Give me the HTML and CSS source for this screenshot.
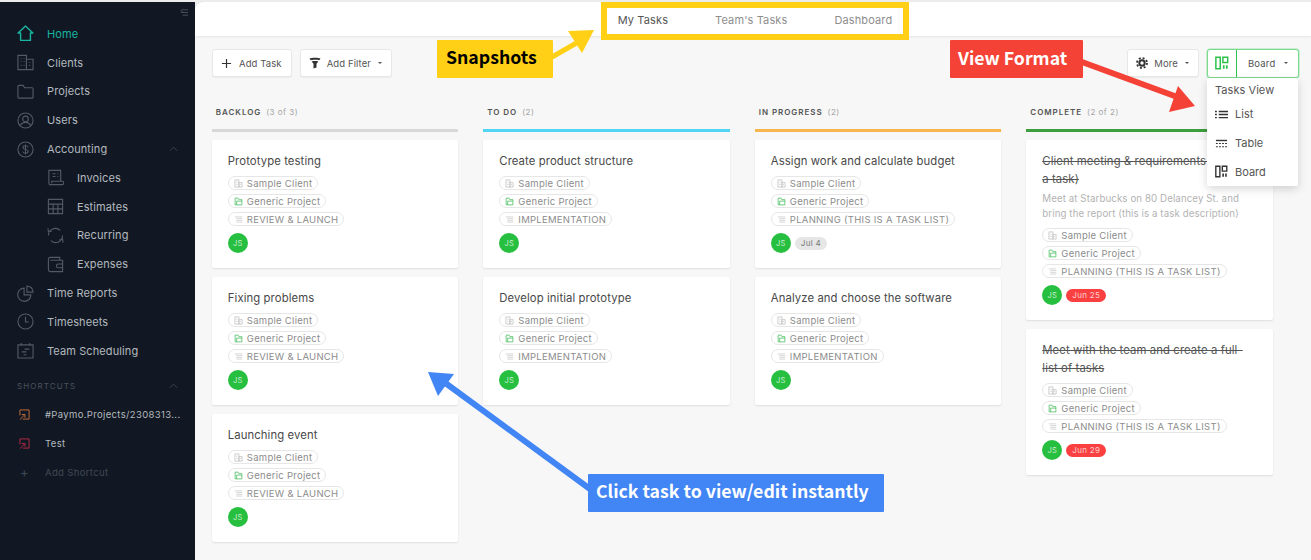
FILE: index.html
```html
<!DOCTYPE html>
<html lang="en">
<head>
<meta charset="utf-8">
<title>Tasks</title>
<link rel="stylesheet" href="styles.css">
</head>
<body>
<svg class="defs" width="0" height="0" aria-hidden="true">
  <symbol id="i-client" viewBox="0 0 10 10"><path d="M1 9V1h4.500v8zM5.500 4H9v5H5.500zM2.500 3.500h1.500M2.500 6h1.500M6.800 6h1" fill="none" stroke="currentColor" stroke-width=".8"/></symbol>
  <symbol id="i-project" viewBox="0 0 12 12"><path d="M1.500 10.500V1.500h4l1 2h4v7zM3.500 10.500V5.500h7" fill="none" stroke="currentColor" stroke-width="1.100"/></symbol>
  <symbol id="i-list" viewBox="0 0 12 10"><path d="M1 1.500h10M3 3.800h8M3 6.100h8M3 8.400h8" fill="none" stroke="currentColor" stroke-width=".8"/></symbol>
  <symbol id="i-short" viewBox="0 0 12 12"><path d="M1 7V1h10v10H4" fill="none" stroke="currentColor" stroke-width="1"/><path d="M1 11.500 6 6.500M3 6h3.500v3.500" fill="none" stroke="currentColor" stroke-width="1"/></symbol>
  <symbol id="i-board" viewBox="0 0 16 16"><path d="M1 1.500h5v13H1zM9 1.500h5.500v6H9z" fill="none" stroke="currentColor" stroke-width="1.700"/><path d="M9 10.500h2v4H9zM12.500 10.500h2v4h-2z" fill="currentColor"/></symbol>
</svg>

<div class="app">
  <aside class="sidebar">
    <svg class="collapse" viewBox="0 0 10 10"><path d="M3 2h6M1 5h8M3 8h6M3 1 1 3l2 1" fill="none" stroke="currentColor" stroke-width=".8"/></svg>
    <nav class="nav">
      <a class="nav-item active"><svg class="nav-icon" viewBox="0 0 18 18"><path d="M9 1 1.200 8.500h2.600v7.800h10.400V8.500h2.600z" fill="none" stroke="currentColor" stroke-width="1.500" stroke-linejoin="round"/></svg>Home</a>
      <a class="nav-item"><svg class="nav-icon" viewBox="0 0 18 18"><path d="M1 1.500h9v15H1zM10 5.500h7v11h-7zM4 5h1M4 8h1M7 5h1M7 8h1M4 12h1M7 12h1M13 9h1M13 12h1" fill="none" stroke="currentColor" stroke-width="1.200"/></svg>Clients</a>
      <a class="nav-item"><svg class="nav-icon" viewBox="0 0 18 18"><path d="M1 3.500a1 1 0 0 1 1-1h4.500l1.500 2.500h8a1 1 0 0 1 1 1v9a1 1 0 0 1-1 1H2a1 1 0 0 1-1-1z" fill="none" stroke="currentColor" stroke-width="1.200"/></svg>Projects</a>
      <a class="nav-item"><svg class="nav-icon" viewBox="0 0 18 18"><circle cx="9" cy="9" r="8" fill="none" stroke="currentColor" stroke-width="1.200"/><circle cx="9" cy="7.300" r="3" fill="none" stroke="currentColor" stroke-width="1.200"/><path d="M3.500 14.500c1-2.500 3-3.500 5.500-3.500s4.500 1 5.500 3.500" fill="none" stroke="currentColor" stroke-width="1.200"/></svg>Users</a>
      <a class="nav-item"><svg class="nav-icon" viewBox="0 0 18 18"><circle cx="9" cy="9" r="8" fill="none" stroke="currentColor" stroke-width="1.200"/><path d="M11.800 6.600C11.400 5.400 10.300 5 9 5c-1.400 0-2.700.6-2.700 1.900 0 2.800 5.600 1.200 5.600 4 0 1.300-1.300 2-2.900 2-1.400 0-2.500-.5-2.900-1.700M9 3.600v10.800" fill="none" stroke="currentColor" stroke-width="1.100"/></svg>Accounting<svg class="chev" viewBox="0 0 10 6"><path d="M1 5 5 1l4 4" fill="none" stroke="currentColor"/></svg></a>
      <a class="nav-item sub"><svg class="nav-icon" viewBox="0 0 18 18"><path d="M2 16V1.500h12.500V13M2 16.500h14a1.500 1.500 0 0 0 0-3.500H5v2M6 5h3M6 8h3M11 5h1M11 8h1" fill="none" stroke="currentColor" stroke-width="1.200"/></svg>Invoices</a>
      <a class="nav-item sub"><svg class="nav-icon" viewBox="0 0 18 18"><path d="M1.500 1.500h15v15h-15zM1.500 6.500h15M1.500 11.500h15M6.500 6.500v10M11.500 6.500v10" fill="none" stroke="currentColor" stroke-width="1.200"/></svg>Estimates</a>
      <a class="nav-item sub"><svg class="nav-icon" viewBox="0 0 18 18"><path d="M1.500 9A7.500 7.500 0 0 1 14 3.500M16.500 9A7.500 7.500 0 0 1 4 14.500M1 1.500l.5 3.500 3.500-.5M17 16.500l-.5-3.500-3.500.5" fill="none" stroke="currentColor" stroke-width="1.200"/></svg>Recurring</a>
      <a class="nav-item sub"><svg class="nav-icon" viewBox="0 0 18 18"><path d="M1.500 3.500a2 2 0 0 1 2-2h10v3M1.500 3.500v11a2 2 0 0 0 2 2h13v-12H3.500M16.500 8.500H12a2 2 0 0 0 0 4h4.500" fill="none" stroke="currentColor" stroke-width="1.200"/></svg>Expenses</a>
      <a class="nav-item"><svg class="nav-icon" viewBox="0 0 18 18"><path d="M7.500 3.300a7 7 0 1 0 7.200 7.200H7.500zM10.500 1v6.500H17A6.500 6.500 0 0 0 10.500 1z" fill="none" stroke="currentColor" stroke-width="1.200"/></svg>Time Reports</a>
      <a class="nav-item"><svg class="nav-icon" viewBox="0 0 18 18"><circle cx="9" cy="9" r="8" fill="none" stroke="currentColor" stroke-width="1.200"/><path d="M9 4v5.500h3.500" fill="none" stroke="currentColor" stroke-width="1.200"/></svg>Timesheets</a>
      <a class="nav-item"><svg class="nav-icon" viewBox="0 0 18 18"><path d="M1 3h16v14H1zM4.500 1v3M13.500 1v3M8 7.500h5M5 10.500h5M7 13.500h3" fill="none" stroke="currentColor" stroke-width="1.200"/></svg>Team Scheduling</a>
    </nav>
    <div class="shortcuts-head">SHORTCUTS<svg class="chev" viewBox="0 0 10 6"><path d="M1 5 5 1l4 4" fill="none" stroke="currentColor"/></svg></div>
    <a class="shortcut"><svg class="short-icon orange"><use href="#i-short"/></svg><span class="short-text">#Paymo.Projects/2308313...</span></a>
    <a class="shortcut"><svg class="short-icon red"><use href="#i-short"/></svg><span class="short-text">Test</span></a>
    <a class="shortcut add"><span class="plus">+</span><span class="short-text">Add Shortcut</span></a>
  </aside>

  <main class="main">
    <header class="topbar">
      <div class="tabs">
        <a class="tab current">My Tasks</a>
        <a class="tab">Team's Tasks</a>
        <a class="tab">Dashboard</a>
      </div>
    </header>

    <div class="toolbar">
      <button class="btn"><svg class="btn-ic" viewBox="0 0 12 12"><path d="M6 1v10M1 6h10" stroke="currentColor" stroke-width="1.300"/></svg>Add Task</button>
      <button class="btn"><svg class="btn-ic wide" viewBox="0 0 12 12"><path d="M.5 1.500C2 .5 10 .5 11.500 1.500L10.300 3.200C8.500 2.500 3.500 2.500 1.700 3.200zM2.600 4.400C4 3.900 8 3.900 9.400 4.400L7.500 6.800V10.600L4.500 11.500V6.800z" fill="#333"/></svg>Add Filter<i class="caret"></i></button>
      <div class="spacer"></div>
      <button class="btn"><svg class="btn-ic wide" viewBox="0 0 12 12"><circle cx="6" cy="6" r="2.700" fill="none" stroke="#333" stroke-width="2"/><circle cx="6" cy="6" r="5" fill="none" stroke="#333" stroke-width="1.800" stroke-dasharray="2 1.930"/></svg>More<i class="caret"></i></button>
      <div class="view-switch">
        <span class="view-icon"><svg class="board-ic"><use href="#i-board"/></svg></span>
        <span class="view-name">Board<i class="caret"></i></span>
      </div>
    </div>

    <div class="board">
      <section class="column">
        <h2 class="col-head">BACKLOG<span class="count">(3 of 3)</span></h2>
        <div class="rule grey"></div>
        <article class="card">
          <h3 class="card-title">Prototype testing</h3>
          <div class="chips">
            <span class="chip"><svg class="chip-ic"><use href="#i-client"/></svg>Sample Client</span>
            <span class="chip"><svg class="chip-ic green"><use href="#i-project"/></svg>Generic Project</span>
            <span class="chip"><svg class="chip-ic"><use href="#i-list"/></svg>REVIEW &amp; LAUNCH</span>
          </div>
          <div class="meta"><span class="avatar">JS</span></div>
        </article>
        <article class="card">
          <h3 class="card-title">Fixing problems</h3>
          <div class="chips">
            <span class="chip"><svg class="chip-ic"><use href="#i-client"/></svg>Sample Client</span>
            <span class="chip"><svg class="chip-ic green"><use href="#i-project"/></svg>Generic Project</span>
            <span class="chip"><svg class="chip-ic"><use href="#i-list"/></svg>REVIEW &amp; LAUNCH</span>
          </div>
          <div class="meta"><span class="avatar">JS</span></div>
        </article>
        <article class="card">
          <h3 class="card-title">Launching event</h3>
          <div class="chips">
            <span class="chip"><svg class="chip-ic"><use href="#i-client"/></svg>Sample Client</span>
            <span class="chip"><svg class="chip-ic green"><use href="#i-project"/></svg>Generic Project</span>
            <span class="chip"><svg class="chip-ic"><use href="#i-list"/></svg>REVIEW &amp; LAUNCH</span>
          </div>
          <div class="meta"><span class="avatar">JS</span></div>
        </article>
      </section>

      <section class="column">
        <h2 class="col-head">TO DO<span class="count">(2)</span></h2>
        <div class="rule blue"></div>
        <article class="card">
          <h3 class="card-title">Create product structure</h3>
          <div class="chips">
            <span class="chip"><svg class="chip-ic"><use href="#i-client"/></svg>Sample Client</span>
            <span class="chip"><svg class="chip-ic green"><use href="#i-project"/></svg>Generic Project</span>
            <span class="chip"><svg class="chip-ic"><use href="#i-list"/></svg>IMPLEMENTATION</span>
          </div>
          <div class="meta"><span class="avatar">JS</span></div>
        </article>
        <article class="card">
          <h3 class="card-title">Develop initial prototype</h3>
          <div class="chips">
            <span class="chip"><svg class="chip-ic"><use href="#i-client"/></svg>Sample Client</span>
            <span class="chip"><svg class="chip-ic green"><use href="#i-project"/></svg>Generic Project</span>
            <span class="chip"><svg class="chip-ic"><use href="#i-list"/></svg>IMPLEMENTATION</span>
          </div>
          <div class="meta"><span class="avatar">JS</span></div>
        </article>
      </section>

      <section class="column">
        <h2 class="col-head">IN PROGRESS<span class="count">(2)</span></h2>
        <div class="rule orange-rule"></div>
        <article class="card">
          <h3 class="card-title">Assign work and calculate budget</h3>
          <div class="chips">
            <span class="chip"><svg class="chip-ic"><use href="#i-client"/></svg>Sample Client</span>
            <span class="chip"><svg class="chip-ic green"><use href="#i-project"/></svg>Generic Project</span>
            <span class="chip"><svg class="chip-ic"><use href="#i-list"/></svg>PLANNING (THIS IS A TASK LIST)</span>
          </div>
          <div class="meta"><span class="avatar">JS</span><span class="date">Jul 4</span></div>
        </article>
        <article class="card">
          <h3 class="card-title">Analyze and choose the software</h3>
          <div class="chips">
            <span class="chip"><svg class="chip-ic"><use href="#i-client"/></svg>Sample Client</span>
            <span class="chip"><svg class="chip-ic green"><use href="#i-project"/></svg>Generic Project</span>
            <span class="chip"><svg class="chip-ic"><use href="#i-list"/></svg>IMPLEMENTATION</span>
          </div>
          <div class="meta"><span class="avatar">JS</span></div>
        </article>
      </section>

      <section class="column">
        <h2 class="col-head">COMPLETE<span class="count">(2 of 2)</span></h2>
        <div class="rule green-rule"></div>
        <article class="card">
          <h3 class="card-title done">Client meeting &amp; requirements (this is<br>a task)</h3>
          <p class="card-desc">Meet at Starbucks on 80 Delancey St. and bring the report (this is a task description)</p>
          <div class="chips">
            <span class="chip"><svg class="chip-ic"><use href="#i-client"/></svg>Sample Client</span>
            <span class="chip"><svg class="chip-ic green"><use href="#i-project"/></svg>Generic Project</span>
            <span class="chip"><svg class="chip-ic"><use href="#i-list"/></svg>PLANNING (THIS IS A TASK LIST)</span>
          </div>
          <div class="meta"><span class="avatar">JS</span><span class="date late">Jun 25</span></div>
        </article>
        <article class="card">
          <h3 class="card-title done">Meet with the team and create a full-<br>list of tasks</h3>
          <div class="chips">
            <span class="chip"><svg class="chip-ic"><use href="#i-client"/></svg>Sample Client</span>
            <span class="chip"><svg class="chip-ic green"><use href="#i-project"/></svg>Generic Project</span>
            <span class="chip"><svg class="chip-ic"><use href="#i-list"/></svg>PLANNING (THIS IS A TASK LIST)</span>
          </div>
          <div class="meta"><span class="avatar">JS</span><span class="date late">Jun 29</span></div>
        </article>
      </section>
    </div>
  </main>

  <div class="menu">
    <div class="menu-title">Tasks View</div>
    <a class="menu-item"><svg class="menu-ic" viewBox="0 0 14 12"><path d="M0 2h2v1.500H0zM0 5.300h2v1.500H0zM0 8.600h2v1.500H0zM4 2h10v1.500H4zM4 5.300h10v1.500H4zM4 8.600h10v1.500H4z" fill="#333"/></svg>List</a>
    <a class="menu-item"><svg class="menu-ic" viewBox="0 0 14 12"><path d="M1 2h12v1.500H1z" fill="#333"/><path d="M1 6h12M1 9.500h12" stroke="#333" stroke-width="1.300" stroke-dasharray="2 1.300"/></svg>Table</a>
    <a class="menu-item"><svg class="menu-ic big"><use href="#i-board"/></svg>Board</a>
  </div>

  <div class="overlay-box"></div>
  <div class="label yellow">Snapshots</div>
  <div class="label redl">View Format</div>
  <div class="label bluel">Click task to view/edit instantly</div>
  <svg class="arrows" viewBox="0 0 1311 560">
    <path d="M552 57 580 41" stroke="#ffd016" stroke-width="5"/>
    <path d="M568 31 594 30 582 53z" fill="#ffd016"/>
    <path d="M1082 62 1180 98" stroke="#f44336" stroke-width="6"/>
    <path d="M1178 86 1195 106 1169 112z" fill="#f44336"/>
    <path d="M590 489 444 382" stroke="#4285f4" stroke-width="6"/>
    <path d="M428 372 454 374 438 396z" fill="#4285f4"/>
  </svg>
</div>
</body>
</html>
```
FILE: styles.css
```css
* { box-sizing: border-box; }
html, body { margin: 0; height: 100%; }
body {
  font-family: Inter, "Noto Sans", sans-serif;
  background: #efefef;
  overflow: hidden;
}
.defs { position: absolute; }
.app {
  position: relative;
  display: flex;
  width: 1311px;
  height: 560px;
  padding-top: 2px;
  overflow: hidden;
  background: #ececec;
}
a { color: inherit; text-decoration: none; }

/* sidebar */
.sidebar {
  position: relative;
  flex: 0 0 195px;
  background: #111823;
  color: #b4b8bf;
  font-size: 11px;
}
.collapse {
  position: absolute;
  top: 6px;
  left: 180px;
  width: 9px;
  height: 9px;
  color: #5b616c;
}
.nav {
  display: flex;
  flex-direction: column;
  padding-top: 17.500px;
}
.nav-item {
  display: flex;
  align-items: center;
  gap: 13px;
  height: 28.800px;
  padding: 0 17px;
  letter-spacing: .1px;
}
.nav-item .nav-icon { color: #525a66; }
.nav-item.active { color: #1ab5a0; }
.nav-item.active .nav-icon { color: #1ab5a0; }
.nav-item.sub { padding-left: 47px; }
.nav-icon { flex: 0 0 17px; width: 17px; height: 17px; }
.chev {
  width: 9px;
  height: 6px;
  margin-left: auto;
  color: #3e4651;
}
.shortcuts-head {
  display: flex;
  align-items: center;
  height: 14px;
  margin: 13.500px 0 7px;
  padding: 0 17px;
  color: #4a515c;
  font-size: 8px;
  letter-spacing: 1.100px;
}
.shortcut {
  display: flex;
  align-items: center;
  height: 29px;
  padding-left: 19px;
  font-size: 9.500px;
  letter-spacing: .35px;
}
.short-icon { flex: 0 0 11px; width: 11px; height: 11px; }
.short-icon.orange { color: #c9713c; }
.short-icon.red { color: #b92c47; }
.short-text { margin-left: 15px; white-space: nowrap; }
.shortcut.add { color: #414853; }
.plus { width: 11px; font-size: 13px; text-align: center; }

/* main */
.main {
  flex: 1;
  min-width: 0;
  background: #f7f7f7;
  border-top-left-radius: 9px;
  overflow: hidden;
}
.topbar {
  display: flex;
  justify-content: center;
  height: 34px;
  background: #fff;
  box-shadow: 0 1px 2px rgba(0, 0, 0, .08);
  padding-left: 4px;
}
.tabs {
  display: flex;
  align-items: center;
  gap: 47px;
  height: 34px;
  padding: 1px 0 0;
  font-size: 11px;
  letter-spacing: .12px;
  color: #8e8e8e;
}
.tab.current { color: #555; }

.toolbar {
  display: flex;
  align-items: center;
  gap: 8px;
  height: 28px;
  margin: 13px 12px 0 17px;
}
.spacer { flex: 1; }
.btn {
  display: flex;
  align-items: center;
  gap: 7px;
  height: 28px;
  padding: 0 9px 0 8px;
  border: 1px solid #e8e8e8;
  border-radius: 3px;
  background: #fff;
  box-shadow: 0 1px 1px rgba(0, 0, 0, .05);
  color: #555;
  font: 400 9.500px Inter, sans-serif;
  letter-spacing: .1px;
}
.btn-ic { width: 11px; height: 11px; color: #333; }
.btn-ic.wide { width: 12px; height: 12px; margin-right: -1px; }
.caret {
  display: inline-block;
  width: 0;
  height: 0;
  border: 2.500px solid transparent;
  border-top-color: #555;
  border-bottom: 0;
}
.view-switch {
  display: flex;
  height: 29px;
  border: 1px solid #7bd88f;
  border-radius: 3px;
  background: #fff;
  box-shadow: 0 0 0 .5px #a5e6b2;
}
.view-icon {
  display: flex;
  align-items: center;
  justify-content: center;
  width: 29px;
  border-right: 1px solid #2cc14a;
  color: #2cc14a;
}
.board-ic { width: 14px; height: 14px; }
.view-name {
  display: flex;
  align-items: center;
  gap: 8px;
  padding: 0 10.500px 0 11px;
  color: #555;
  font-size: 9.500px;
  letter-spacing: .2px;
}

/* board */
.board {
  display: flex;
  gap: 25px;
  margin: 28px 0 0 16.800px;
}
.column { flex: 0 0 246.500px; width: 246.500px; }
.col-head {
  display: flex;
  align-items: center;
  height: 14px;
  margin: 0 0 10px;
  padding-left: 4px;
  color: #555;
  font-size: 8px;
  font-weight: 600;
  letter-spacing: .95px;
}
.count {
  margin-left: 5px;
  color: #a6a6a6;
  font-weight: 400;
  letter-spacing: .5px;
}
.rule { height: 3px; margin-bottom: 8px; background: #d8d8d8; }
.rule.blue { background: #52d4f5; }
.rule.orange-rule { background: #f7b54d; }
.rule.green-rule { background: #3d9e3d; }
.card {
  margin-bottom: 9px;
  padding: 12px 16px 15px;
  background: #fff;
  border-radius: 2px;
  box-shadow: 0 1px 2px rgba(0, 0, 0, .1);
}
.card-title {
  margin: 0 0 6px;
  color: #484848;
  font-size: 11.300px;
  font-weight: 400;
  line-height: 18px;
  letter-spacing: .1px;
}
.card-title.done { color: #555; text-decoration: line-through; }
.card-desc {
  margin: -3px 0 7px;
  color: #b3b3b3;
  font-size: 9.700px;
  line-height: 15px;
  letter-spacing: .1px;
}
.chips {
  display: flex;
  flex-direction: column;
  align-items: flex-start;
  gap: 4px;
}
.chip {
  display: flex;
  align-items: center;
  gap: 4px;
  height: 14px;
  padding: 0 5px;
  border: 1px solid #e6e6e6;
  border-radius: 7px;
  color: #8c8c8c;
  font-size: 9.500px;
  letter-spacing: .28px;
  white-space: nowrap;
}
.chip-ic { width: 9px; height: 9px; color: #bcbcbc; }
.chip-ic.green { color: #53c167; }
.meta {
  display: flex;
  align-items: center;
  gap: 4px;
  margin-top: 7px;
}
.avatar {
  display: flex;
  align-items: center;
  justify-content: center;
  width: 20px;
  height: 20px;
  border-radius: 50%;
  background: #27bf40;
  color: #cdeed3;
  font-size: 7.500px;
  letter-spacing: .3px;
}
.date {
  height: 13px;
  padding: 0 6px;
  border-radius: 7px;
  background: #e6e6e6;
  color: #777;
  font-size: 8px;
  line-height: 13px;
  letter-spacing: .3px;
}
.date.late { background: #fa4040; color: #fbd0d0; }

/* dropdown */
.menu {
  position: absolute;
  top: 78px;
  left: 1207px;
  width: 91px;
  height: 108px;
  padding-top: 5px;
  background: #fff;
  border-radius: 2px;
  box-shadow: 0 3px 10px rgba(0, 0, 0, .16);
  color: #555;
  font-size: 11px;
}
.menu-title { height: 17px; padding-left: 8px; line-height: 15px; letter-spacing: .05px; }
.menu-item {
  display: flex;
  align-items: center;
  gap: 7px;
  height: 28.700px;
  padding-left: 8px;
}
.menu-ic { width: 13px; height: 13px; }
.menu-ic.big { color: #333; }

/* annotations */
.overlay-box {
  position: absolute;
  top: 2px;
  left: 601px;
  width: 308px;
  height: 38px;
  border: 6px solid #ffd016;
}
.label {
  position: absolute;
  display: flex;
  align-items: center;
  height: 38px;
  padding-bottom: 7px;
  font-family: "Noto Sans CJK SC", "Noto Sans", sans-serif;
  font-weight: 700;
  font-size: 17.700px;
  border-radius: 1px;
  white-space: nowrap;
}
.label.yellow { top: 40px; left: 437px; width: 116px; padding-left: 9px; background: #ffd016; color: #000; }
.label.redl { top: 40px; left: 950px; width: 133px; padding-left: 8px; padding-bottom: 5px; background: #f44336; color: #fff; }
.label.bluel { top: 474px; left: 588px; width: 296px; padding-left: 8px; background: #4285f4; color: #fff; }
.arrows {
  position: absolute;
  top: 0;
  left: 0;
  width: 1311px;
  height: 560px;
  pointer-events: none;
}
```
